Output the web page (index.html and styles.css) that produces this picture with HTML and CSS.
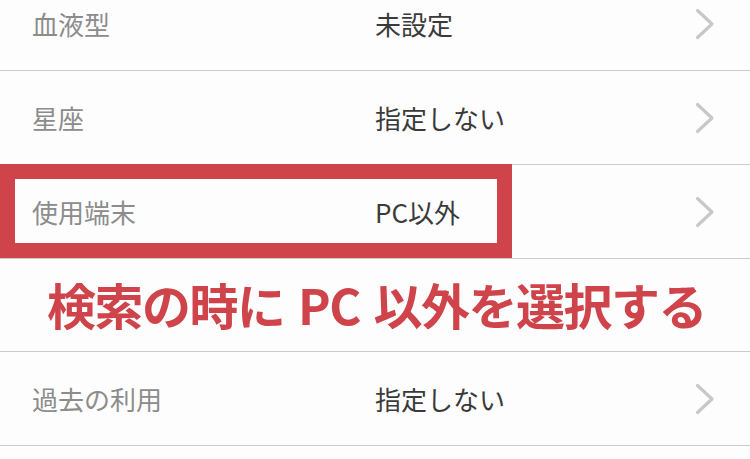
FILE: index.html
```html
<!DOCTYPE html>
<html lang="ja">
<head>
<meta charset="utf-8">
<link rel="stylesheet" href="styles.css">
</head>
<body>
<div class="list">
  <div class="row first">
    <span class="label">血液型</span>
    <span class="value">未設定</span>
    <svg class="chev" viewBox="0 0 20 32" width="20" height="32"><polyline points="2.5,2.5 17,16 2.5,29.5"/></svg>
  </div>
  <div class="row">
    <span class="label">星座</span>
    <span class="value">指定しない</span>
    <svg class="chev" viewBox="0 0 20 32" width="20" height="32"><polyline points="2.5,2.5 17,16 2.5,29.5"/></svg>
  </div>
  <div class="row highlighted">
    <span class="label">使用端末</span>
    <span class="value">PC以外</span>
    <svg class="chev" viewBox="0 0 20 32" width="20" height="32"><polyline points="2.5,2.5 17,16 2.5,29.5"/></svg>
    <div class="frame"></div>
  </div>
  <div class="row note">
    <span class="note-text">検索の時に PC 以外を選択する</span>
  </div>
  <div class="row">
    <span class="label">過去の利用</span>
    <span class="value">指定しない</span>
    <svg class="chev" viewBox="0 0 20 32" width="20" height="32"><polyline points="2.5,2.5 17,16 2.5,29.5"/></svg>
  </div>
</div>
</body>
</html>
```

FILE: styles.css
```css
html, body {
  margin: 0;
  padding: 0;
  background: #fdfdfd;
  overflow: hidden;
}
body {
  font-family: "Noto Sans CJK JP", "Noto Sans", sans-serif;
}
.list {
  display: flex;
  flex-direction: column;
}
.row {
  position: relative;
  display: flex;
  align-items: center;
  height: 93px;
  border-bottom: 1px solid #cbcbcb;
  padding-left: 32px;
  padding-right: 35px;
}
.row.first {
  margin-top: -23px;
}
.label {
  width: 343px;
  font-size: 26px;
  color: #8c8c8c;
  line-height: 1;
}
.value {
  flex: 1;
  font-size: 26px;
  color: #3a3a3a;
  line-height: 1;
}
.chev {
  display: block;
}
.chev polyline {
  fill: none;
  stroke: #c8c8c8;
  stroke-width: 3.2;
  stroke-linecap: round;
  stroke-linejoin: round;
}
.frame {
  position: absolute;
  left: 0;
  top: -1px;
  width: 512px;
  height: 94px;
  box-sizing: border-box;
  border: 15px solid #cf434b;
}
.note {
  padding-left: 47px;
  padding-bottom: 4px;
  box-sizing: border-box;
}
.note-text {
  font-size: 49px;
  font-weight: 700;
  letter-spacing: -1.5px;
  word-spacing: 4px;
  color: #cf434b;
  line-height: 1;
  white-space: nowrap;
}
```
